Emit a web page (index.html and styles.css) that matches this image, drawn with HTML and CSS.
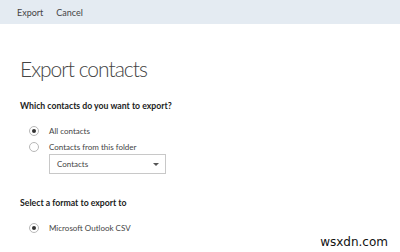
FILE: index.html
```html
<!DOCTYPE html>
<html lang="en">
<head>
<meta charset="UTF-8" />
<title>Export contacts</title>
<link rel="stylesheet" href="styles.css">
</head>
<body>

<!-- ---------- COMMAND BAR ---------- -->
<div class="cmdbar">
  <span class="cmd">Export</span>
  <span class="cmd">Cancel</span>
</div>

<!-- ---------- PANEL ---------- -->
<div class="panel">
  <h1>Export contacts</h1>

  <h2>Which contacts do you want to export?</h2>
  <div class="options">
    <div class="opt"><span class="radio on"></span>All contacts</div>
    <div class="opt"><span class="radio"></span>Contacts from this folder</div>
    <div class="select">
      <span>Contacts</span>
      <span class="caret"></span>
    </div>
  </div>

  <h2 class="second">Select a format to export to</h2>
  <div class="options">
    <div class="opt"><span class="radio on"></span>Microsoft Outlook CSV</div>
  </div>
</div>

<div class="watermark">wsxdn.com</div>

</body>
</html>
```

FILE: styles.css
```css
body{margin:0;background:#fff;font-family:Lato,"Open Sans",sans-serif;color:#333;height:252px;overflow:hidden;position:relative}

/* ---- top bar ---- */
.cmdbar{background:#e4ebf2;height:24px;display:flex;align-items:center;gap:13px;padding-left:17px;font-size:9px;color:#444}

/* ---- panel ---- */
.panel{padding:30px 0 0 20px}
h1{margin:0;font-size:21px;font-weight:300;color:#444;line-height:30px;letter-spacing:-1px}
h2{margin:15px 0 0;font-size:8.7px;font-weight:700;color:#222;line-height:14px}
h2.second{margin-top:22px}
.options{padding:10px 0 0 9px}
.opt{display:flex;align-items:center;height:16px;font-size:8px;color:#444}
.radio{width:10px;height:10px;border:1px solid #b8b8b8;border-radius:50%;box-sizing:border-box;margin-right:10px;display:flex;align-items:center;justify-content:center;background:#fff}
.radio.on::after{content:"";width:4px;height:4px;border-radius:50%;background:#333}
.select{margin:-1px 0 0 20px;width:117px;height:20px;border:1px solid #c8c8c8;box-sizing:border-box;display:flex;align-items:center;justify-content:space-between;padding:0 6px 0 7px;font-size:8px;color:#444}
.caret{width:0;height:0;border-left:3px solid transparent;border-right:3px solid transparent;border-top:3px solid #555}

.watermark{position:absolute;right:10px;bottom:3px;background:#fff;padding:0 2px;font-family:"DejaVu Sans",sans-serif;font-size:12px;color:#111}
```
